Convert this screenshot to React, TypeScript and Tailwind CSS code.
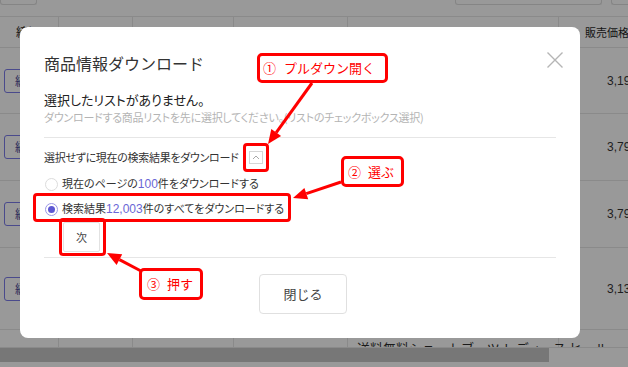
import React from "react";

const jp = "font-['Noto_Sans_CJK_JP','Noto_Sans',sans-serif]";

function BgRow({ h, price, last }: { h: string; price?: string; last?: boolean }) {
  return (
    <div className={`flex ${h} border-b border-[#8a8a8a] overflow-hidden`}>
      <div className="w-[59px] shrink-0 border-r border-[#8a8a8a] flex items-center">
        {!last && (
          <div className="ml-[4px] w-[50px] h-[24px] border border-[#4a4a8c] rounded-[3px] text-[12px] text-[#2a2a5a] flex items-center pl-[10px]">
            編集
          </div>
        )}
      </div>
      <div className="w-[74px] shrink-0 border-r border-[#8a8a8a]" />
      <div className="w-[101px] shrink-0 border-r border-[#8a8a8a]" />
      <div className="w-[114px] shrink-0 border-r border-[#8a8a8a]" />
      <div className="w-[211px] shrink-0 border-r border-[#8a8a8a]">
        {last && (
          <div className="pl-[9px] pt-[10px] text-[13px] text-[#1a1a1a] whitespace-nowrap leading-[16px]">
            送料無料ショートブーツ レディース ヒール
          </div>
        )}
      </div>
      <div className="flex-1 min-w-0 flex items-center pl-[48px] text-[12px] text-[#1e1e1e] font-['Liberation_Sans',sans-serif] whitespace-nowrap">
        {price}
      </div>
    </div>
  );
}

export default function App() {
  return (
    <div className={`relative w-[628px] h-[367px] overflow-hidden bg-[#999] ${jp}`}>
      {/* background page */}
      <div className="flex flex-col">
        <div className="h-[17px] flex items-start border-b border-[#8a8a8a]">
          <div className="w-[37px] shrink-0 h-[5px] border border-t-0 border-[#858585] rounded-b-[3px]" />
          <div className="ml-[418px] shrink-0 w-[147px] h-[5px] border border-t-0 border-[#858585] rounded-b-[3px]" />
          <div className="ml-[9px] shrink-0 w-[40px] h-[5px] border border-t-0 border-r-0 border-[#858585] rounded-bl-[3px]" />
        </div>
        <div className="flex h-[31px] border-b border-[#8a8a8a] text-[12px] text-[#141414]">
          <div className="w-[59px] shrink-0 border-r border-[#8a8a8a] flex items-center pl-[16px]">締切</div>
          <div className="w-[74px] shrink-0 border-r border-[#8a8a8a]" />
          <div className="w-[101px] shrink-0 border-r border-[#8a8a8a]" />
          <div className="w-[114px] shrink-0 border-r border-[#8a8a8a]" />
          <div className="w-[211px] shrink-0 border-r border-[#8a8a8a]" />
          <div className="flex-1 min-w-0 flex items-center pl-[26px] text-[11px] whitespace-nowrap">販売価格</div>
        </div>
        <BgRow h="h-[66px]" price="3,190" />
        <BgRow h="h-[67px]" price="3,790" />
        <BgRow h="h-[67px]" price="3,790" />
        <BgRow h="h-[82px]" price="3,135" />
        <BgRow h="h-[18px]" last />
        <div className="h-[14px] flex">
          <div className="w-[549px] bg-[#777]" />
        </div>
      </div>

      {/* modal */}
      <div className="absolute left-[20px] top-[27px] w-[560px] h-[311px] bg-white rounded-[8px] px-[24px]">
        <div className="pt-[24px] h-[48px] text-[16px] leading-[24px] text-[#333]">商品情報ダウンロード</div>
        <svg className="absolute left-[527px] top-[25px]" width="16" height="16" viewBox="0 0 16 16">
          <path d="M0.5 0.5 L15.5 15.5 M15.5 0.5 L0.5 15.5" stroke="#b5b5b5" strokeWidth="1.4" fill="none" />
        </svg>
        <div className="mt-[16px] h-[18px] text-[13px] leading-[18px] text-[#222] [font-feature-settings:'palt']">
          選択したリストがありません。
        </div>
        <div className="h-[16px] text-[11px] leading-[16px] tracking-[-0.25px] text-[#b4b4b4] [font-feature-settings:'palt'] whitespace-nowrap">
          ダウンロードする商品リストを先に選択してください。(リストのチェックボックス選択)
        </div>
        <div className="mt-[12px] border-t border-[#e6e6e6]" />
        <div className="mt-[9px] h-[20px] flex items-center text-[11px] tracking-[-0.3px] text-[#333] [font-feature-settings:'palt']">
          <span>選択せずに現在の検索結果をダウンロード</span>
          <div className="ml-[11px] w-[14px] h-[13px] border border-[#d6d6d6] flex items-center justify-center">
            <svg width="8" height="5" viewBox="0 0 8 5">
              <path d="M1 4 L4 1 L7 4" stroke="#a8a8a8" strokeWidth="1" fill="none" />
            </svg>
          </div>
        </div>
        <div className="mt-[7px] h-[20px] flex items-center text-[11px] text-[#333] [font-feature-settings:'palt']">
          <div className="ml-[1px] w-[13px] h-[13px] rounded-full border border-[#dcdcdc]" />
          <span className="ml-[4px] whitespace-nowrap">
            現在のページの<span className="text-[#6a66d6] font-['Liberation_Sans',sans-serif] text-[12px]">100</span>件をダウンロードする
          </span>
        </div>
        <div className="mt-[5px] h-[20px] flex items-center text-[11px] text-[#333] [font-feature-settings:'palt']">
          <div className="ml-[1px] w-[13px] h-[13px] rounded-full border border-[#9c98e6] flex items-center justify-center">
            <div className="w-[7px] h-[7px] rounded-full bg-[#5d58d3]" />
          </div>
          <span className="ml-[4px] whitespace-nowrap">
            検索結果<span className="text-[#6a66d6] font-['Liberation_Sans',sans-serif] text-[12px]">12,003</span>件のすべてをダウンロードする
          </span>
        </div>
        <div className="mt-[3px] ml-[19px] w-[37px] h-[30px] border border-[#e2e2e2] rounded-[2px] flex items-center justify-center text-[11px] text-[#444]">
          次
        </div>
        <div className="mt-[5px] border-t border-[#e6e6e6]" />
        <div className="mt-[16px] ml-[215px] w-[88px] h-[40px] border border-[#e0e0e0] rounded-[4px] flex items-center justify-center text-[13px] text-[#444]">
          閉じる
        </div>
      </div>

      {/* arrows */}
      <svg className="absolute left-0 top-0 pointer-events-none" width="628" height="367" viewBox="0 0 628 367">
        <g stroke="#ff0000" strokeWidth="3" fill="none">
          <line x1="312" y1="83" x2="276.2" y2="132.6" />
          <line x1="341" y1="182" x2="306.3" y2="193.6" />
          <line x1="141" y1="271" x2="119.4" y2="259.6" />
        </g>
        <g fill="#ff0000">
          <polygon points="268,144 281.1,136.1 271.3,129.1" />
          <polygon points="293,198 308.2,199.3 304.4,187.9" />
          <polygon points="107,253 116.6,264.9 122.2,254.3" />
        </g>
      </svg>

      {/* highlight outlines */}
      <div className="absolute left-[243px] top-[143px] w-[26px] h-[29px] border-[3px] border-[#ff0000] rounded-[4px]" />
      <div className="absolute left-[33px] top-[193px] w-[258px] h-[29px] border-[3px] border-[#ff0000] rounded-[4px]" />
      <div className="absolute left-[59px] top-[218px] w-[47px] h-[38px] border-[3px] border-[#ff0000] rounded-[4px]" />

      {/* callouts */}
      <div className="absolute left-[257px] top-[53px] w-[131px] h-[30px] border-[3px] border-[#ff0000] rounded-[5px] bg-white flex items-center pl-[3px] gap-[8px] text-[13px] text-[#ff0000] whitespace-nowrap">
        <span>①</span>
        <span>プルダウン開く</span>
      </div>
      <div className="absolute left-[341px] top-[156px] w-[63px] h-[31px] border-[3px] border-[#ff0000] rounded-[5px] bg-white flex items-center pl-[4px] gap-[7px] text-[13px] text-[#ff0000] whitespace-nowrap">
        <span>②</span>
        <span>選ぶ</span>
      </div>
      <div className="absolute left-[139px] top-[268px] w-[64px] h-[32px] border-[3px] border-[#ff0000] rounded-[5px] bg-white flex items-center pl-[5px] gap-[7px] text-[13px] text-[#ff0000] whitespace-nowrap">
        <span>③</span>
        <span>押す</span>
      </div>
    </div>
  );
}
